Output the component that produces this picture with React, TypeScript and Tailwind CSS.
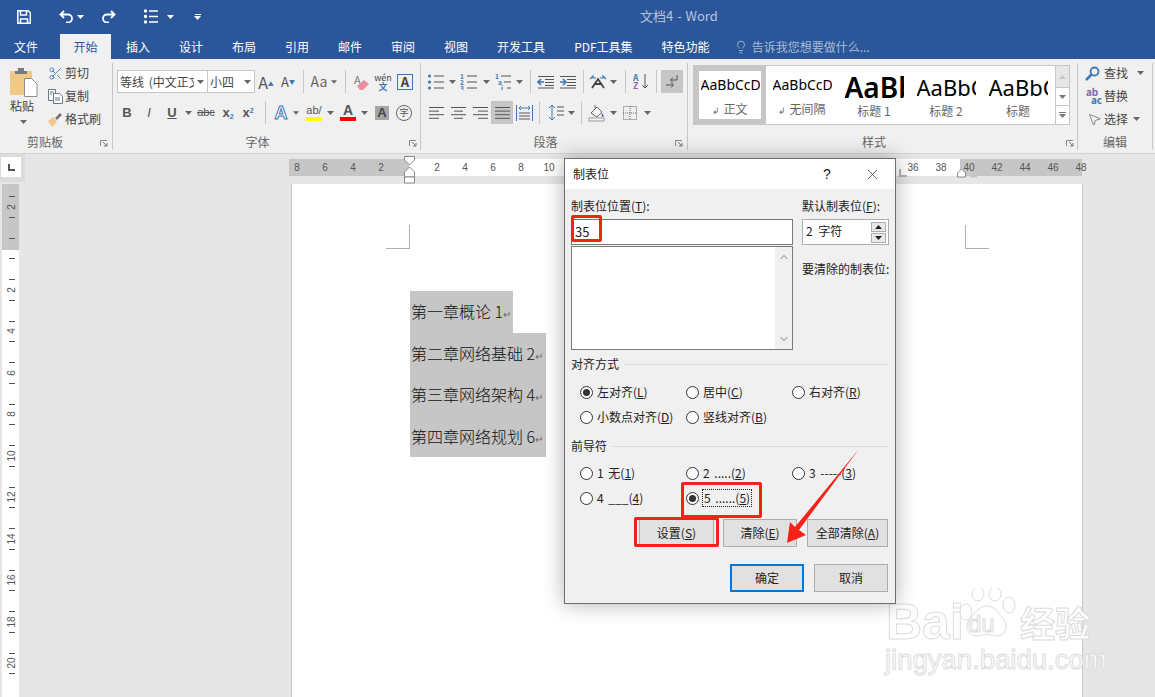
import type { ReactNode } from 'react';
import { Lightbulb, MousePointer2, Scissors, X, ChevronUp, ChevronDown } from 'lucide-react';

const tabs = ['插入', '设计', '布局', '引用', '邮件', '审阅', '视图', '开发工具', 'PDF工具集', '特色功能'];
const blue = '#3f78b5';
const ink = '#555555';

function Btn({ w, ml = 0, active, children }: { w: number; ml?: number; active?: boolean; children?: ReactNode }) {
  return (
    <div
      className={`flex h-[23px] shrink-0 items-center justify-center ${active ? 'bg-[#c6c6c6]' : ''}`}
      style={{ width: w, marginLeft: ml }}
    >
      {children}
    </div>
  );
}

function Caret({ w = 8, ml = 0, color = '#666666' }: { w?: number; ml?: number; color?: string }) {
  return (
    <div className="flex h-[23px] shrink-0 items-center justify-center" style={{ width: w, marginLeft: ml }}>
      <svg width="7" height="4" viewBox="0 0 7 4"><path d="M0 0h7L3.500 4z" fill={color} /></svg>
    </div>
  );
}

function Sep({ ml }: { ml: number }) {
  return <div className="my-[1px] h-[23px] w-px shrink-0 bg-[#c6c6c6]" style={{ marginLeft: ml }} />;
}

function Lines({ rows, color = ink, w = 18 }: { rows: [number, number][]; color?: string; w?: number }) {
  return (
    <svg width={w} height="16" viewBox={`0 0 ${w} 16`}>
      {rows.map(([a, b], i) => (
        <path key={i} d={`M${a} ${2.5 + i * 3.6}H${b}`} stroke={color} strokeWidth="1" />
      ))}
    </svg>
  );
}

function ListIcon({ kind }: { kind: 'bullet' | 'number' | 'multi' }) {
  return (
    <svg width="18" height="16" viewBox="0 0 18 16">
      {[2, 8, 14].map((y, i) => (
        <g key={y}>
          {kind === 'bullet' && <circle cx="2.500" cy={y} r="1.600" fill={blue} />}
          {kind !== 'bullet' && (
            <text x={kind === 'multi' ? 1 + i * 3 : 0} y={y + 2.5} fontSize="6.500" fontWeight="700" fill={blue}>
              {kind === 'multi' ? ['1', 'a', 'i'][i] : i + 1}
            </text>
          )}
          <path d={`M${kind === 'multi' ? 7 + i * 3 : 7} ${y}H17`} stroke={ink} />
        </g>
      ))}
    </svg>
  );
}

function Indent({ flip }: { flip?: boolean }) {
  return (
    <svg width="18" height="14" viewBox="0 0 18 14">
      {[1.5, 4.5, 7.5, 10.5, 13].map((y) => (
        <path key={y} d={`M${y === 1.5 || y === 13 ? 1 : 8} ${y}H17`} stroke={ink} />
      ))}
      <path d={flip ? 'M1 7h5M4 4l3 3-3 3' : 'M7 7H2M4 4L1 7l3 3'} stroke={blue} strokeWidth="1.600" fill="none" />
    </svg>
  );
}

function Launcher({ right }: { right: number }) {
  return (
    <svg className="absolute bottom-[3px]" style={{ right }} width="8" height="7" viewBox="0 0 8 7">
      <path d="M.5 6V.5H7" fill="none" stroke="#888888" />
      <path d="M3 2l4 4M4 6h3V3" fill="none" stroke="#777777" />
    </svg>
  );
}

function Group({ w, label, labelPad = 0, launcher, children }: {
  w: number; label: string; labelPad?: number; launcher?: number; children: ReactNode;
}) {
  return (
    <div className="relative flex h-[87px] shrink-0 flex-col border-r border-[#c6c6c6]" style={{ width: w }}>
      <div className="h-[70px] shrink-0">{children}</div>
      <div className="h-[17px] text-center text-[12px] leading-[17px] text-[#666666]" style={{ paddingRight: labelPad }}>{label}</div>
      {launcher !== undefined && <Launcher right={launcher} />}
    </div>
  );
}

function SmallBtn({ icon, label, caret }: { icon: ReactNode; label: string; caret?: number }) {
  return (
    <div className="flex h-[20px] items-center text-[12px] text-[#444444]">
      <div className="flex w-[18px] justify-center">{icon}</div>
      <span className="ml-[1px]">{label}</span>
      {caret && <Caret ml={caret} />}
    </div>
  );
}

function StyleItem({ w, preview, label, mark, selected, previewClass }: {
  w: number; preview: string; label: string; mark?: boolean; selected?: boolean; previewClass: string;
}) {
  return (
    <div
      className={`flex shrink-0 flex-col items-center ${selected ? 'border-[5px] border-[#c6c6c6]' : 'border-[5px] border-white'}`}
      style={{ width: w }}
    >
      <div className="flex h-[33px] w-[59px] items-end justify-start overflow-hidden whitespace-nowrap font-['Noto_Sans','Liberation_Sans',sans-serif] leading-[30px] text-black">
        <span className={previewClass}>{preview}</span>
      </div>
      <div className="mt-[1px] text-[12px] leading-[16px] text-[#666666]">
        {mark && <span className="mr-[3px] text-[9px]">↲</span>}
        {label}
      </div>
    </div>
  );
}

function Ribbon() {
  return (
    <div className="flex h-[94px] items-start bg-[#f0f0f0] pt-[4px]">
      <Group w={113} label="剪贴板" labelPad={22} launcher={4}>
        <div className="flex">
          <div className="ml-[10px] flex w-[36px] flex-col">
            <svg className="mt-[4px]" width="28" height="30" viewBox="0 0 28 30">
              <rect x="0" y="4" width="22" height="24" rx="1" fill="#f0c987" />
              <path d="M5 4h12v3H5zM8 1h6v3H8z" fill="#7a7a7a" />
              <path d="M14.500 11.500h7l5.500 5.500v12.500h-12.500z" fill="#ffffff" stroke="#8c8c8c" />
            </svg>
            <div className="text-[12px] leading-[18px] text-[#444444]">粘贴</div>
            <div className="-mt-[5px]"><Caret w={26} /></div>
          </div>
          <div className="flex flex-col gap-[3px]">
            <SmallBtn label="剪切" icon={<Scissors size={15} color={blue} strokeWidth={1.4} />} />
            <SmallBtn
              label="复制"
              icon={
                <svg width="15" height="15" viewBox="0 0 15 15" fill="#ffffff" stroke="#667788">
                  <path d="M.5.5h7v11h-7z" /><path d="M5.500 4.500h6l3 3v7h-9z" /><path d="M7 9h5M7 11h5M2 3h4M2 5h2" />
                </svg>
              }
            />
            <SmallBtn
              label="格式刷"
              icon={
                <svg width="16" height="15" viewBox="0 0 16 15">
                  <path d="M1 9l5-4 4 5-5 5z" fill="#f0c987" />
                  <path d="M8 6l5-5 2 2-5 5z" fill="#777777" />
                </svg>
              }
            />
          </div>
        </div>
      </Group>

      <Group w={308} label="字体" labelPad={18} launcher={3}>
        <div className="ml-[4px] mt-[7px] flex h-[23px] items-center">
          <div className="flex h-[23px] w-[91px] shrink-0 items-center border border-[#c6c6c6] bg-white pl-[2px] text-[12px] text-[#444444]">
            <span className="w-[74px] overflow-hidden whitespace-nowrap [word-spacing:2px]">等线 (中文正文</span>
            <Caret w={12} />
          </div>
          <div className="-ml-px flex h-[23px] w-[48px] shrink-0 items-center border border-[#c6c6c6] bg-white pl-[2px] text-[12px] text-[#444444]">
            <span className="w-[32px]">小四</span>
            <Caret w={11} />
          </div>
          <Btn w={22}>
            <span className="text-[16px] leading-none text-[#555555]">A<sup className="text-[6px] text-[#3f78b5]">▲</sup></span>
          </Btn>
          <Btn w={22}>
            <span className="text-[13px] leading-none text-[#555555]">A<sup className="text-[6px] text-[#3f78b5]">▼</sup></span>
          </Btn>
          <Sep ml={4} />
          <Btn w={24} ml={3}><span className="text-[14px] text-[#666666]">Aa</span></Btn>
          <Caret w={6} />
          <Sep ml={8} />
          <Btn w={26} ml={3}>
            <svg width="16" height="16" viewBox="0 0 16 16">
              <text x="0" y="10" fontSize="11" fill="#777777">A</text>
              <path d="M3 12l7-6 5 4-6 6H6z" fill="#ee8f9f" />
            </svg>
          </Btn>
          <Btn w={16}>
            <div className="flex flex-col items-center leading-[9px]">
              <span className="text-[9px] text-[#444444]">wén</span>
              <span className="text-[9px] font-bold text-[#3f78b5]">文</span>
            </div>
          </Btn>
          <div className="ml-[6px] flex h-[16px] w-[16px] items-center justify-center border border-[#3f78b5] text-[13px] font-semibold leading-none text-[#444444]">A</div>
        </div>
        <div className="ml-[4px] mt-[8px] flex h-[23px] items-center font-['Liberation_Sans',sans-serif]">
          <Btn w={20}><span className="text-[13px] font-bold text-[#555555]">B</span></Btn>
          <Btn w={24}><span className="text-[13px] italic text-[#555555]">I</span></Btn>
          <Btn w={22}><span className="text-[13px] font-bold text-[#555555] underline">U</span></Btn>
          <Caret w={10} />
          <Btn w={26}><span className="text-[11px] text-[#555555] line-through">abc</span></Btn>
          <Btn w={18}><span className="text-[13px] font-bold text-[#555555]">x<sub className="text-[7px] text-[#3f78b5]">2</sub></span></Btn>
          <Btn w={22}><span className="text-[13px] font-bold text-[#555555]">x<sup className="text-[7px] text-[#3f78b5]">2</sup></span></Btn>
          <Sep ml={6} />
          <Btn w={24} ml={3}><span className="text-[18px] font-bold leading-none text-white [-webkit-text-stroke:1px_#3f78b5]">A</span></Btn>
          <Caret w={6} />
          <Btn w={24} ml={3}>
            <div className="flex w-[16px] flex-col items-center">
              <span className="text-[11px] leading-[13px] text-[#555555]">ab/</span>
              <span className="h-[4px] w-[16px] bg-[#ffff00]" />
            </div>
          </Btn>
          <Caret />
          <Btn w={24} ml={2}>
            <div className="flex w-[16px] flex-col items-center">
              <span className="text-[14px] font-bold leading-[13px] text-[#555555]">A</span>
              <span className="h-[4px] w-[16px] bg-[#ff0000]" />
            </div>
          </Btn>
          <Caret />
          <Btn w={24} ml={2}>
            <span className="flex h-[14px] w-[14px] items-center justify-center bg-[#a6a6a6] text-[13px] font-bold text-[#444444]">A</span>
          </Btn>
          <Btn w={20}>
            <span className="flex h-[16px] w-[16px] items-center justify-center rounded-full border border-[#666666] font-['Noto_Sans_CJK_SC'] text-[9px] text-[#555555]">字</span>
          </Btn>
        </div>
      </Group>

      <Group w={267} label="段落" labelPad={17} launcher={4}>
        <div className="mt-[7px] flex h-[23px] items-center">
          <Btn w={22} ml={4}><ListIcon kind="bullet" /></Btn>
          <Caret w={10} />
          <Btn w={24}><ListIcon kind="number" /></Btn>
          <Caret w={10} />
          <Btn w={24}><ListIcon kind="multi" /></Btn>
          <Caret />
          <Sep ml={7} />
          <Btn w={22} ml={4}><Indent /></Btn>
          <Btn w={22}><Indent flip /></Btn>
          <Sep ml={4} />
          <Btn w={22} ml={3}>
            <svg width="18" height="14" viewBox="0 0 18 14">
              <path d="M3 13L9 4l6 9M5 9h8" stroke="#444444" strokeWidth="1.800" fill="none" />
              <path d="M1 4l3-3v2h3M17 4l-3-3v2h-3" stroke={blue} strokeWidth="1.200" fill="none" />
            </svg>
          </Btn>
          <Caret />
          <Sep ml={8} />
          <Btn w={22} ml={4}>
            <svg width="16" height="17" viewBox="0 0 16 17">
              <text x="0" y="8" fontSize="8.500" fontWeight="700" fill={blue}>A</text>
              <text x="0" y="16" fontSize="8.500" fontWeight="700" fill="#8f5fb0">Z</text>
              <path d="M12 1v14M9 12l3 3 3-3" stroke={ink} fill="none" />
            </svg>
          </Btn>
          <Sep ml={4} />
          <Btn w={22} ml={4} active>
            <svg width="14" height="15" viewBox="0 0 14 15" fill="none">
              <path d="M12 1v5H6M8 3.500L5.500 6 8 8.500" stroke="#555555" />
              <path d="M1 11h7M6 8.500L8.500 11 6 13.500" stroke="#555555" />
            </svg>
          </Btn>
        </div>
        <div className="mt-[8px] flex h-[23px] items-center">
          <Btn w={22} ml={4}><Lines rows={[[2, 17], [2, 12], [2, 17], [2, 12]]} /></Btn>
          <Btn w={22}><Lines rows={[[2, 17], [5, 14], [2, 17], [5, 14]]} /></Btn>
          <Btn w={22}><Lines rows={[[2, 17], [7, 17], [2, 17], [7, 17]]} /></Btn>
          <Btn w={22} active><Lines rows={[[2, 17], [2, 17], [2, 17], [2, 17]]} /></Btn>
          <Btn w={22}>
            <svg width="17" height="16" viewBox="0 0 17 16" fill="none">
              <path d="M.5 0v16M16.500 0v16" stroke={blue} />
              <path d="M3 3h11M5 1L3 3l2 2M12 1l2 2-2 2" stroke={blue} />
              <path d="M3 8h11M3 11h11M3 14h11" stroke={ink} />
            </svg>
          </Btn>
          <Sep ml={4} />
          <Btn w={24} ml={3}>
            <svg width="17" height="17" viewBox="0 0 17 17" fill="none">
              <path d="M5 1v15M2 4l3-3 3 3M2 13l3 3 3-3" stroke={blue} />
              <path d="M10 3h7M10 7h7M10 11h7" stroke={ink} />
            </svg>
          </Btn>
          <Caret />
          <Sep ml={6} />
          <Btn w={24} ml={3}>
            <svg width="18" height="18" viewBox="0 0 18 18">
              <path d="M3 9l6-6 5 5-5 5z" fill="#f7f7f7" stroke="#666666" />
              <path d="M7 4V1" stroke="#666666" />
              <path d="M14 9c2 2 2 4 .8 4S13 11 14 9z" fill={blue} />
              <rect x="1" y="14" width="15" height="3" fill="#f4f4f4" stroke="#999999" />
            </svg>
          </Btn>
          <Caret />
          <Btn w={16} ml={5}>
            <svg width="14" height="14" viewBox="0 0 14 14" fill="none" stroke="#666666" strokeDasharray="1 1">
              <path d="M.5.500h13v13H.5zM7 0v14M0 7h14" />
            </svg>
          </Btn>
          <Caret ml={5} />
        </div>
      </Group>

      <Group w={390} label="样式" labelPad={17} launcher={3}>
        <div className="ml-[5px] mt-[2px] flex h-[60px] w-[377px] border border-[#c6c6c6] bg-white">
          <StyleItem w={72} preview="AaBbCcD" label="正文" mark selected previewClass="text-[14px]" />
          <StyleItem w={72} preview="AaBbCcD" label="无间隔" mark previewClass="text-[14px]" />
          <StyleItem w={72} preview="AaBb" label="标题 1" previewClass="text-[28px] font-semibold" />
          <StyleItem w={72} preview="AaBbC" label="标题 2" previewClass="text-[22px]" />
          <StyleItem w={72} preview="AaBbC" label="标题" previewClass="text-[22px]" />
          <div className="ml-auto flex w-[14px] flex-col border-l border-[#c6c6c6] text-[#666666]">
            <div className="flex h-[21px] items-center justify-center bg-[#e6e6e6]">
              <svg width="7" height="4" viewBox="0 0 7 4"><path d="M0 4h7L3.500 0z" fill="#c6c6c6" /></svg>
            </div>
            <div className="flex h-[19px] items-center justify-center border-y border-[#c6c6c6]">
              <svg width="7" height="4" viewBox="0 0 7 4"><path d="M0 0h7L3.500 4z" fill="#777777" /></svg>
            </div>
            <div className="flex flex-1 flex-col items-center justify-center">
              <span className="mb-[1px] h-px w-[7px] bg-[#777777]" />
              <svg width="7" height="4" viewBox="0 0 7 4"><path d="M0 0h7L3.500 4z" fill="#777777" /></svg>
            </div>
          </div>
        </div>
      </Group>

      <Group w={75} label="编辑">
        <div className="ml-[7px] flex flex-col gap-[3px]">
          <SmallBtn
            label="查找"
            caret={8}
            icon={
              <svg className="-ml-[3px]" width="15" height="15" viewBox="0 0 15 15" fill="none" stroke={blue} strokeWidth="1.800">
                <circle cx="9.500" cy="5.500" r="4" /><path d="M6.500 8.500L1 14" strokeWidth="2.500" />
              </svg>
            }
          />
          <SmallBtn
            label="替换"
            icon={
              <div className="flex flex-col text-[10px] font-bold leading-[8px]">
                <span className="text-[#8f5fb0]">ab</span>
                <span className="pl-[5px] text-[#3f78b5]">ac</span>
              </div>
            }
          />
          <SmallBtn label="选择" caret={4} icon={<MousePointer2 size={15} color="#666666" strokeWidth={1.2} />} />
        </div>
      </Group>
    </div>
  );
}

function HRuler() {
  const left = [8, 6, 4, 2];
  // 12 to 34 sit under the dialog
  const mid = Array.from({ length: 19 }, (_, i) => (i + 1) * 2);
  const right = [40, 42, 44, 46, 48];
  const cell = 'w-[28px] shrink-0 text-center';
  return (
    <div className="ml-[264px] flex h-[17px] font-['Liberation_Sans',sans-serif] text-[10px] leading-[17px] text-[#555555]">
      <div className="flex w-[120px] shrink-0 justify-end bg-[#c6c6c6] pr-[14px]">
        {left.map((n) => <span key={n} className={cell}>{n}</span>)}
      </div>
      <div className="flex w-[551px] shrink-0 bg-white pl-[14px]">
        {mid.map((n) => <span key={n} className={cell}>{n > 10 && n < 36 ? '' : n}</span>)}
      </div>
      <div className="flex w-[122px] shrink-0 bg-[#c6c6c6]">
        <div className="-ml-[5px] flex">
          {right.map((n) => <span key={n} className={cell}>{n}</span>)}
        </div>
      </div>
    </div>
  );
}

function VRuler() {
  const rows = ['2', '', '2', '4', '6', '8', '10', '12', '14', '16', '18', '20'];
  return (
    <div className="ml-[2px] flex w-[17px] shrink-0 flex-col overflow-hidden bg-[linear-gradient(#c6c6c6_66px,#ffffff_66px)] pt-[2px]">
      {rows.map((n, i) => (
        <div key={i} className="flex h-[41.500px] shrink-0 flex-col items-center justify-between py-[10px] pl-[2px]">
          <span className="h-px w-[6px] bg-[#555555]" />
          {n ? <span className="-rotate-90 font-['Liberation_Sans',sans-serif] text-[10px] leading-none text-[#555555]">{n}</span> : <span />}
          <span className="h-px w-[6px] bg-[#555555]" />
        </div>
      ))}
    </div>
  );
}

function Radio({ checked, w = 106, children }: { checked?: boolean; w?: number; children: ReactNode }) {
  return (
    <div className="flex h-[16px] shrink-0 items-center gap-[4px] [word-spacing:2px]" style={{ width: w }}>
      <span className="flex h-[13px] w-[13px] shrink-0 items-center justify-center rounded-full border border-[#333333] bg-white">
        {checked && <span className="h-[7px] w-[7px] rounded-full bg-[#333333]" />}
      </span>
      {children}
    </div>
  );
}

function DlgBtn({ w, ml = 0, primary, children }: { w: number; ml?: number; primary?: boolean; children: ReactNode }) {
  return (
    <div
      className={`flex h-[28px] items-center justify-center bg-[#e1e1e1] ${primary ? 'border-2 border-[#0078d7]' : 'border border-[#adadad]'}`}
      style={{ width: w, marginLeft: ml }}
    >
      {children}
    </div>
  );
}

function Dialog() {
  return (
    <div className="absolute left-[564px] top-[158px] h-[446px] w-[332px] border border-[#6d6d6d] bg-[#f0f0f0] text-[12px] leading-[16px] text-[#222222] shadow-[0_0_20px_rgba(0,0,0,0.3)]">
      <div className="flex h-[30px] items-center bg-white pl-[8px]">
        <span>制表位</span>
        <span className="ml-[214px] font-['Liberation_Sans',sans-serif] text-[14px]">?</span>
        <X className="ml-[33px]" size={17} strokeWidth={1} color="#222222" />
      </div>
      <div className="pl-[6px]">
        <div className="flex pt-[9px]">
          <div className="w-[222px]">
            <div>制表位位置(<u>T</u>):</div>
            <div className="mt-[5px] flex h-[26px] items-center border border-[#7a7a7a] bg-white pb-[1px] pl-[3px] text-[13px]">35</div>
            <div className="mt-px flex h-[104px] justify-end border border-[#7a7a7a] bg-white">
              <div className="flex w-[17px] flex-col items-center justify-between bg-[#f0f0f0] py-[4px]">
                <ChevronUp size={12} color="#b5b5b5" strokeWidth={3} />
                <ChevronDown size={12} color="#b5b5b5" strokeWidth={3} />
              </div>
            </div>
          </div>
          <div className="ml-[9px] w-[87px]">
            <div className="whitespace-nowrap">默认制表位(<u>F</u>):</div>
            <div className="mt-[5px] flex h-[26px] items-center justify-between border border-[#adadad] bg-white pl-[3px] pr-[2px]">
              <span className="-mt-[2px] [word-spacing:3px]">2 字符</span>
              <div className="flex flex-col gap-px">
                <span className="flex h-[10px] w-[15px] items-center justify-center border border-[#adadad] bg-[#e8e8e8]">
                  <svg width="7" height="4" viewBox="0 0 7 4"><path d="M0 4h7L3.500 0z" fill="#222222" /></svg>
                </span>
                <span className="flex h-[10px] w-[15px] items-center justify-center border border-[#adadad] bg-[#e8e8e8]">
                  <svg width="7" height="4" viewBox="0 0 7 4"><path d="M0 0h7L3.500 4z" fill="#222222" /></svg>
                </span>
              </div>
            </div>
            <div className="mt-[16px] whitespace-nowrap">要清除的制表位:</div>
          </div>
        </div>

        <div className="mt-[6px] flex h-[16px] items-center gap-[5px] pr-[6px]">
          <span className="shrink-0">对齐方式</span>
          <span className="h-px flex-1 bg-[#dcdcdc]" />
        </div>
        <div className="ml-[9px] mt-[12px] flex">
          <Radio checked><span>左对齐(<u>L</u>)</span></Radio>
          <Radio><span>居中(<u>C</u>)</span></Radio>
          <Radio><span>右对齐(<u>R</u>)</span></Radio>
        </div>
        <div className="ml-[9px] mt-[9px] flex">
          <Radio><span className="whitespace-nowrap">小数点对齐(<u>D</u>)</span></Radio>
          <Radio><span>竖线对齐(<u>B</u>)</span></Radio>
        </div>

        <div className="mt-[13px] flex h-[16px] items-center gap-[5px] pr-[6px]">
          <span className="shrink-0">前导符</span>
          <span className="h-px flex-1 bg-[#dcdcdc]" />
        </div>
        <div className="ml-[9px] mt-[11px] flex">
          <Radio><span>1 无(<u>1</u>)</span></Radio>
          <Radio><span>2 .....(<u>2</u>)</span></Radio>
          <Radio><span>3 -----(<u>3</u>)</span></Radio>
        </div>
        <div className="ml-[9px] mt-[9px] flex">
          <Radio><span>4 ___(<u>4</u>)</span></Radio>
          <Radio checked>
            <span className="-my-[2px] -ml-[1px] border border-dotted border-[#222222] px-px">5 ......(<u>5</u>)</span>
          </Radio>
        </div>

        <div className="ml-[68px] mt-[13px] flex">
          <DlgBtn w={75}><span>设置(<u>S</u>)</span></DlgBtn>
          <DlgBtn w={74} ml={9}><span>清除(<u>E</u>)</span></DlgBtn>
          <DlgBtn w={81} ml={10}><span>全部清除(<u>A</u>)</span></DlgBtn>
        </div>
        <div className="ml-[159px] mt-[17px] flex">
          <DlgBtn w={74} primary>确定</DlgBtn>
          <DlgBtn w={74} ml={10}>取消</DlgBtn>
        </div>
      </div>
    </div>
  );
}

function Watermark() {
  const outline = 'text-white [-webkit-text-stroke:1px_#dcdcdc]';
  return (
    <>
      <span className={`absolute left-[886px] top-[592px] font-['Liberation_Sans',sans-serif] text-[50px] font-bold leading-[60px] ${outline}`}>Bai</span>
      <svg className="absolute left-[955px] top-[588px]" width="64" height="54" viewBox="0 0 64 54" fill="#ffffff" stroke="#dcdcdc">
        <ellipse cx="11" cy="24" rx="6" ry="8" />
        <ellipse cx="23" cy="6" rx="6" ry="7" />
        <ellipse cx="40" cy="6" rx="6" ry="7" />
        <ellipse cx="54" cy="17" rx="6" ry="8" />
        <path d="M32 18c8 0 12 8 17 14 5 7 1 16-8 16-4 0-6-2-9-2s-5 2-10 2c-9 0-13-9-8-16 6-6 9-14 18-14z" />
      </svg>
      <span className={`absolute left-[968px] top-[611px] font-['Liberation_Sans',sans-serif] text-[24px] leading-[26px] ${outline}`}>du</span>
      <span className={`absolute left-[1020px] top-[600px] text-[35px] font-bold leading-[44px] ${outline}`}>经验</span>
      <span className={`absolute left-[885px] top-[644px] font-['Liberation_Sans',sans-serif] text-[27.500px] leading-[32px] ${outline}`}>jingyan.baidu.com</span>
    </>
  );
}

export default function App() {
  const redBox = 'absolute border-[3px] border-[#f5221a] rounded-[2px]';
  return (
    <div className="relative h-[697px] w-[1155px] overflow-hidden bg-[#e6e6e6] font-['Noto_Sans_CJK_SC','Liberation_Sans',sans-serif]">
      {/* Title bar */}
      <div className="relative flex h-[33px] items-center bg-[#2b579a] text-white">
        <svg className="ml-[17px]" width="14" height="14" viewBox="0 0 14 14" fill="none" stroke="#ffffff" strokeWidth="1.500">
          <path d="M.8.800h10.500l2 2v10.400H.8z" /><path d="M3.500 1v4h6V1M3.500 13V9h7v4" />
        </svg>
        <svg className="ml-[28px]" width="15" height="13" viewBox="0 0 15 13" fill="none" stroke="#ffffff" strokeWidth="1.800">
          <path d="M5 1L1.500 4.500 5 8M2 4.500h7a4 4 0 010 8H7" />
        </svg>
        <Caret ml={2} color="#ffffff" />
        <svg className="ml-[17px]" width="15" height="13" viewBox="0 0 15 13" fill="none" stroke="#ffffff" strokeWidth="1.800">
          <path d="M10 1l3.500 3.500L10 8M13 4.500H6a4 4 0 000 8h2" />
        </svg>
        <svg className="ml-[28px]" width="14" height="15" viewBox="0 0 14 15" fill="none" stroke="#ffffff" strokeWidth="1.300">
          <circle cx="1.500" cy="2" r="1" fill="#ffffff" /><circle cx="1.500" cy="7.500" r="1" fill="#ffffff" /><circle cx="1.500" cy="13" r="1" fill="#ffffff" />
          <path d="M5 2h9M5 7.500h9M5 13h9" />
        </svg>
        <Caret ml={8} color="#ffffff" />
        <div className="ml-[20px] flex flex-col items-center gap-[1px]">
          <span className="h-px w-[6px] bg-white" />
          <svg width="7" height="4" viewBox="0 0 7 4"><path d="M0 0h7L3.500 4z" fill="#ffffff" /></svg>
        </div>
        <span className="-mt-[2px] ml-[439px] text-[13px] text-[#b5c5dc] [word-spacing:1px]">文档4 - Word</span>
      </div>

      {/* Tabs */}
      <div className="flex h-[26px] items-end bg-[#2b579a] pl-[1px] text-[12px] leading-[25px] text-white">
        <span className="w-[50px] text-center">文件</span>
        <span className="ml-[9px] w-[51px] bg-[#f0f0f0] text-center text-[#2b579a]">开始</span>
        <div className="ml-[15px] flex gap-[29px]">
          {tabs.map((t) => <span key={t}>{t}</span>)}
        </div>
        <Lightbulb className="mb-[5px] ml-[24px]" size={14} color="#a9bbd6" strokeWidth={1.500} />
        <span className="ml-[4px] text-[#a9bbd6]">告诉我您想要做什么...</span>
      </div>

      <Ribbon />

      {/* Rulers and page */}
      <div className="h-[544px] border-t border-[#d5d5d5]">
        <div className="flex h-[30px]">
          <div className="h-[28px] w-[25px] shrink-0 bg-[#dcdcdc] pl-px pt-[3px]">
            <div className="flex h-[20px] w-[20px] items-center justify-center bg-white">
              <span className="h-[7px] w-[7px] border-b-2 border-l-2 border-[#555555]" />
            </div>
          </div>
          <div className="pt-[5px]">
            <HRuler />
          </div>
        </div>
        <div className="flex h-[513px] overflow-hidden">
          <VRuler />
          <div className="relative ml-[272px] h-[513px] w-[792px] shrink-0 border-x border-[#c6c6c6] bg-white">
            <div className="absolute left-[94px] top-[41px] h-[24px] w-[24px] border-b border-r border-[#b0b0b0]" />
            <div className="absolute left-[673px] top-[41px] h-[24px] w-[24px] border-b border-l border-[#b0b0b0]" />
            <div className="ml-[118px] pt-[107px] text-[16px] leading-[40px] text-[#111111]">
              <div className="h-[41.500px] w-[103px] whitespace-nowrap bg-[#c6c6c6] pl-px font-light">第一章概论 1<span className="text-[10px] text-[#666666]">↵</span></div>
              {['第二章网络基础 2', '第三章网络架构 4', '第四章网络规划 6'].map((t) => (
                <div key={t} className="h-[41.500px] w-[136px] whitespace-nowrap bg-[#c6c6c6] pl-px font-light">
                  {t}<span className="text-[10px] text-[#666666]">↵</span>
                </div>
              ))}
            </div>
          </div>
        </div>
      </div>

      {/* Ruler markers */}
      <svg className="absolute left-[404px] top-[156px]" width="11" height="28" viewBox="0 0 11 28" fill="#ffffff" stroke="#888888">
        <path d="M.5.500h10V4L5.500 9 .5 4z" />
        <path d="M5.500 11l5 5v5H.5v-5z" />
        <path d="M.5 21h10v6H.5z" />
      </svg>
      <svg className="absolute left-[898px] top-[168px]" width="85" height="10" viewBox="0 0 85 10" fill="none">
        <path d="M2 1v7h7" stroke="#b5b5b5" strokeWidth="2" />
        <path d="M59.500 9V5l4-4 4 4v4z" fill="#ffffff" stroke="#888888" />
        <path d="M72 8.500h7" stroke="#c6c6c6" strokeWidth="2" />
      </svg>

      <Watermark />
      <Dialog />

      {/* Annotations */}
      <div className={`${redBox} left-[571px] top-[215px] h-[27px] w-[31px]`} />
      <div className={`${redBox} left-[681px] top-[482px] h-[36px] w-[81px]`} />
      <div className={`${redBox} left-[634px] top-[517px] h-[30px] w-[85px]`} />
      <svg className="absolute left-0 top-0" width="1155" height="697" viewBox="0 0 1155 697">
        <path d="M859 449L799 530L806 535L787 543L790 522L795 527z" fill="#f5221a" />
      </svg>
    </div>
  );
}
